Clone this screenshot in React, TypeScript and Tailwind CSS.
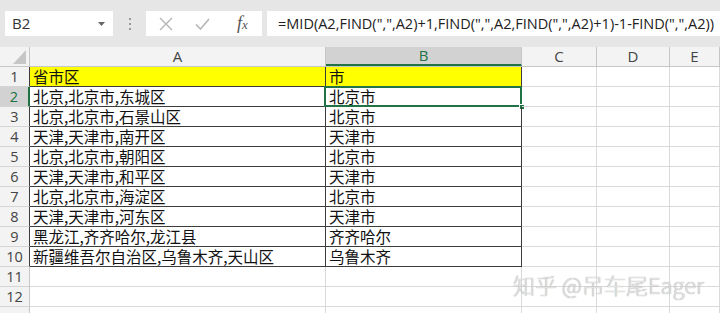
import React from 'react';

const COLS = [
  { key: 'A', w: 296 },
  { key: 'B', w: 196 },
  { key: 'C', w: 75 },
  { key: 'D', w: 73 },
  { key: 'E', w: 50 },
];

const DATA: [string, string][] = [
  ['省市区', '市'],
  ['北京,北京市,东城区', '北京市'],
  ['北京,北京市,石景山区', '北京市'],
  ['天津,天津市,南开区', '天津市'],
  ['北京,北京市,朝阳区', '北京市'],
  ['天津,天津市,和平区', '天津市'],
  ['北京,北京市,海淀区', '北京市'],
  ['天津,天津市,河东区', '天津市'],
  ['黑龙江,齐齐哈尔,龙江县', '齐齐哈尔'],
  ['新疆维吾尔自治区,乌鲁木齐,天山区', '乌鲁木齐'],
];

const cjk = { fontFamily: '"Noto Sans CJK SC", "Noto Sans", sans-serif' };
const ui = { fontFamily: '"Open Sans", "Liberation Sans", sans-serif' };

const Toolbar: React.FC = () => (
  <div className="h-[47px] bg-[#e6e6e6] flex items-start pt-[11px] pl-[5px]">
    <div className="w-[108px] h-[25px] bg-white flex items-center justify-between pl-[7px] pr-[8px] text-[15px] text-[#333]" style={ui}>
      <span>B2</span>
      <svg width="7" height="4" viewBox="0 0 7 4"><path d="M0 0h7L3.5 4z" fill="#666" /></svg>
    </div>
    <div className="w-[33px] h-[25px] flex flex-col items-center justify-center gap-[3px]">
      <span className="w-[2px] h-[2px] bg-[#9a9a9a]" />
      <span className="w-[2px] h-[2px] bg-[#9a9a9a]" />
      <span className="w-[2px] h-[2px] bg-[#9a9a9a]" />
    </div>
    <div className="w-[116px] h-[25px] bg-white flex items-center">
      <svg className="ml-[13px]" width="14" height="14" viewBox="0 0 14 14">
        <path d="M1 1L13 13M13 1L1 13" stroke="#b5b5b5" strokeWidth="1.4" fill="none" />
      </svg>
      <svg className="ml-[22px]" width="15" height="12" viewBox="0 0 15 12">
        <path d="M1 6.5L5.5 11L14 1" stroke="#b5b5b5" strokeWidth="1.6" fill="none" />
      </svg>
      <span className="ml-[27px] text-[18px] italic text-[#555]" style={{ fontFamily: '"Liberation Serif", serif' }}>
        f<span className="text-[13px]">x</span>
      </span>
    </div>
    <div className="ml-[5px] flex-1 h-[25px] bg-white flex items-center pl-[11px] text-[14.5px] text-[#222] whitespace-nowrap" style={ui}>
      =MID(A2,FIND(",",A2)+1,FIND(",",A2,FIND(",",A2)+1)-1-FIND(",",A2))
    </div>
  </div>
);

export default function App() {
  const rows = Array.from({ length: 13 }, (_, i) => i + 1);
  return (
    <div className="w-[720px] h-[313px] overflow-hidden bg-white relative">
      <Toolbar />
      {/* column headers */}
      <div className="flex h-[20px] bg-[#f3f3f3] border-b border-[#c6c6c6]" style={ui}>
        <div className="w-[30px] shrink-0 border-r border-[#c6c6c6] flex items-end justify-end pr-[3px] pb-[2px]">
          <svg width="13" height="14" viewBox="0 0 13 14"><path d="M13 0V14H0z" fill="#c6c6c6" /></svg>
        </div>
        {COLS.map(c => (
          <div
            key={c.key}
            className={`shrink-0 flex items-center justify-center text-[15px] border-r border-[#c6c6c6] ${c.key === 'B' ? 'bg-[#d2d2d2] text-[#217346] border-b-2 border-b-[#217346]' : 'text-[#444]'}`}
            style={{ width: c.w }}
          >
            {c.key}
          </div>
        ))}
      </div>
      {rows.map(r => {
        const inTable = r <= 10;
        const d = DATA[r - 1];
        return (
          <div key={r} className="flex h-[20px]">
            <div
              className={`w-[30px] shrink-0 flex items-center justify-center text-[14.5px] border-b border-[#d4d4d4] border-r ${
                r === 2 ? 'bg-[#d2d2d2] text-[#217346] border-r-2 border-r-[#217346]' : 'bg-[#f3f3f3] text-[#444] ' + (inTable ? 'border-r-[#3c3c3c]' : 'border-r-[#c6c6c6]')
              }`}
              style={ui}
            >
              {r < 13 ? r : ''}
            </div>
            {COLS.map((c, ci) => {
              const tableCell = inTable && ci < 2;
              const yellow = r === 1 && ci < 2;
              const text = tableCell ? d[ci] : '';
              return (
                <div
                  key={c.key}
                  className={`shrink-0 relative flex items-end pl-[3px] text-[15.5px] leading-[19px] text-[#111] whitespace-nowrap border-r border-b ${
                    tableCell ? 'border-[#3c3c3c]' : 'border-[#d9d9d9]'
                  } ${yellow ? 'bg-[#ffff00]' : ''}`}
                  style={{ ...cjk, width: c.w }}
                >
                  {text}
                  {r === 2 && ci === 1 && (
                    <>
                      <div className="absolute -left-[2px] -top-[1px] -right-[1px] -bottom-[1px] border-2 border-[#217346] pointer-events-none" />
                      <div className="absolute -right-[4px] -bottom-[4px] w-[6px] h-[6px] bg-[#217346] border border-white" />
                    </>
                  )}
                </div>
              );
            })}
          </div>
        );
      })}
      <div
        className="absolute left-[513px] top-[268px] text-[22px] font-light text-[#e2e2e2] whitespace-nowrap"
        style={{ ...cjk, textShadow: '0 0 1px #8f8f8f' }}
      >
        知乎 @吊车尾Eager
      </div>
    </div>
  );
}
